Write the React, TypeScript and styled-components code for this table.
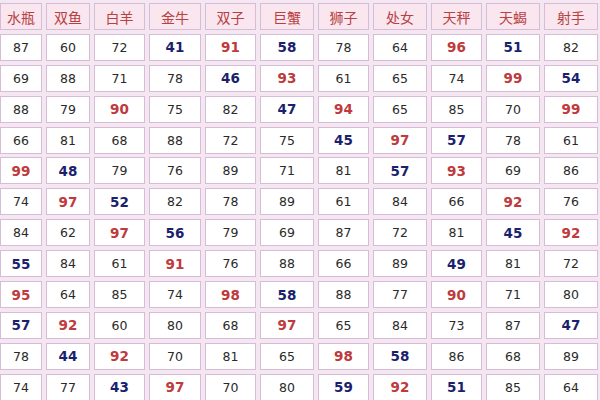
import React from "react";
import styled, { createGlobalStyle } from "styled-components";

const GlobalStyle = createGlobalStyle`
  html, body {
    margin: 0;
    padding: 0;
    background: #f5e7f2;
    overflow: hidden;
  }
`;

const Page = styled.div`
  width: 600px;
  height: 400px;
  overflow: hidden;
  background: #f5e7f2;
`;

const Grid = styled.div`
  display: grid;
  grid-template-columns: 42px 44px 51px 52px 51px 54px 51px 54px 51px 54px 54px;
  grid-auto-rows: 27px;
  column-gap: 4px;
  row-gap: 3.9px;
  padding-top: 3px;
`;

const HeadCell = styled.div`
  display: flex;
  align-items: center;
  justify-content: center;
  background: #f9e6ef;
  border: 1px solid #d6bcd6;
  color: #b8403f;
  font-family: "Noto Sans CJK SC", "Noto Sans", sans-serif;
  font-size: 14px;
  white-space: nowrap;
`;

type Tone = "n" | "r" | "b";

const Cell = styled.div<{ $tone: Tone }>`
  display: flex;
  align-items: center;
  justify-content: center;
  background: #ffffff;
  border: 1px solid #d6bcd6;
  font-family: "DejaVu Sans", sans-serif;
  font-size: ${(p) => (p.$tone === "n" ? "12.5px" : "13.5px")};
  font-weight: ${(p) => (p.$tone === "n" ? 400 : 700)};
  color: ${(p) =>
    p.$tone === "r" ? "#bf3a3c" : p.$tone === "b" ? "#1c1f6e" : "#2a2a2a"};
`;

const signs = ["水瓶", "双鱼", "白羊", "金牛", "双子", "巨蟹", "狮子", "处女", "天秤", "天蝎", "射手"];

// r = red (high), b = blue (low)
const rows = [
  "87 60 72 41b 91r 58b 78 64 96r 51b 82",
  "69 88 71 78 46b 93r 61 65 74 99r 54b",
  "88 79 90r 75 82 47b 94r 65 85 70 99r",
  "66 81 68 88 72 75 45b 97r 57b 78 61",
  "99r 48b 79 76 89 71 81 57b 93r 69 86",
  "74 97r 52b 82 78 89 61 84 66 92r 76",
  "84 62 97r 56b 79 69 87 72 81 45b 92r",
  "55b 84 61 91r 76 88 66 89 49b 81 72",
  "95r 64 85 74 98r 58b 88 77 90r 71 80",
  "57b 92r 60 80 68 97r 65 84 73 87 47b",
  "78 44b 92r 70 81 65 98r 58b 86 68 89",
  "74 77 43b 97r 70 80 59b 92r 51b 85 64",
];

export default function App() {
  return (
    <Page>
      <GlobalStyle />
      <Grid>
        {signs.map((s) => (
          <HeadCell key={s}>{s}</HeadCell>
        ))}
        {rows.map((row, i) =>
          row.split(" ").map((v, j) => {
            const last = v[v.length - 1];
            const tone: Tone = last === "r" ? "r" : last === "b" ? "b" : "n";
            const num = tone === "n" ? v : v.slice(0, -1);
            return (
              <Cell key={`${i}-${j}`} $tone={tone}>
                {num}
              </Cell>
            );
          })
        )}
      </Grid>
    </Page>
  );
}
